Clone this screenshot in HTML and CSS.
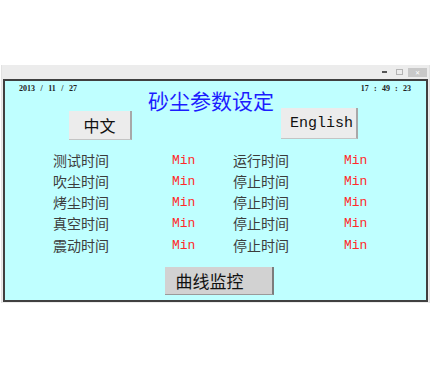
FILE: index.html
```html
<!DOCTYPE html>
<html lang="zh-CN">
    <head>
        <meta charset="UTF-8">
        <meta name="viewport" content="width=device-width, initial-scale=1.0">
        <title>砂尘参数设定</title>
        <link rel="stylesheet" href="styles.css">
    </head>
    <body>
        <div class="window">
            <div class="titlebar">
                <span class="ctl ctl-min"></span>
                <span class="ctl ctl-restore"></span>
                <span class="ctl ctl-close">&#x2715;</span>
            </div>
            <div class="panel">
                <div class="header">
                    <span class="date">2013 / 11 / 27</span>
                    <h1 class="title">砂尘参数设定</h1>
                    <span class="time">17 : 49 : 23</span>
                </div>
                <div class="langs">
                    <button class="btn btn-cn">中文</button>
                    <button class="btn btn-en">English</button>
                </div>
                <div class="params">
                    <span class="label">测试时间</span><span class="unit">Min</span>
                    <span class="label">运行时间</span><span class="unit">Min</span>
                    <span class="label">吹尘时间</span><span class="unit">Min</span>
                    <span class="label">停止时间</span><span class="unit">Min</span>
                    <span class="label">烤尘时间</span><span class="unit">Min</span>
                    <span class="label">停止时间</span><span class="unit">Min</span>
                    <span class="label">真空时间</span><span class="unit">Min</span>
                    <span class="label">停止时间</span><span class="unit">Min</span>
                    <span class="label">震动时间</span><span class="unit">Min</span>
                    <span class="label">停止时间</span><span class="unit">Min</span>
                </div>
                <div class="footer">
                    <button class="btn btn-curve">曲线监控</button>
                </div>
            </div>
        </div>
    </body>
</html>
```

FILE: styles.css
```css
body{
    margin: 0;
    padding-top: 65px;
    background-color: #fff;
    font-family: "Noto Sans CJK SC", sans-serif;
}

.window{
    width: 429px;
    margin-left: 1px;
    padding-bottom: 1px;
    background-color: #ececec;
    border-left: 1px solid #e2e2e2;
    border-right: 1px solid #e2e2e2;
    box-sizing: border-box;
}

/* 标题栏按钮 */
.titlebar{
    display: flex;
    justify-content: flex-end;
    align-items: center;
    height: 14px;
    padding-right: 2px;
}

.ctl{
    display: block;
}

.ctl-min{
    width: 5px;
    height: 2px;
    margin-right: 9px;
    background-color: #555;
}

.ctl-restore{
    width: 5px;
    height: 4px;
    margin-right: 5px;
    border: 1px solid #b4b4b4;
}

.ctl-close{
    width: 19px;
    height: 9px;
    background-color: #c8c8c8;
    color: #fff;
    font-family: "DejaVu Sans", sans-serif;
    font-size: 6px;
    line-height: 9px;
    text-align: center;
}

.panel{
    margin: 0 1px;
    padding-bottom: 5px;
    background-color: #bfffff;
    border: 2px solid #404040;
}

.header{
    display: flex;
    align-items: flex-start;
    height: 27px;
    padding: 0 15px 0 14px;
}

.date,
.time{
    font-family: "Liberation Serif", serif;
    font-size: 8px;
    font-weight: bold;
    line-height: 10px;
    color: #222;
    margin-top: 3px;
    white-space: pre;
}

.date{
    width: 129px;
    word-spacing: 3.5px;
}

.time{
    margin-left: auto;
    word-spacing: 3.2px;
}

.title{
    margin: 7px 0 0;
    font-size: 21px;
    font-weight: normal;
    line-height: 24px;
    color: #1c1cff;
}

.btn{
    display: block;
    padding: 0;
    border: 0;
    color: #111;
    font-family: "Noto Sans CJK SC", sans-serif;
    box-sizing: border-box;
}

.langs{
    display: flex;
    align-items: flex-start;
    height: 32px;
}

.btn-cn{
    width: 63px;
    height: 29px;
    margin: 3px 0 0 64px;
    font-size: 16px;
    background-color: #ececec;
    border-right: 2px solid #a8a8a8;
    border-bottom: 1px solid #c4c4c4;
}

.btn-en{
    width: 77px;
    height: 31px;
    margin-left: 149px;
    padding-left: 6px;
    font-family: "Liberation Mono", monospace;
    font-size: 15px;
    background-color: #ececec;
    border-right: 2px solid #a8a8a8;
    border-bottom: 1px solid #c4c4c4;
}

.params{
    display: grid;
    grid-template-columns: 119px 61px 111px auto;
    grid-auto-rows: 21.25px;
    align-items: center;
    margin-top: 9.4px;
    padding-left: 48px;
}

.label{
    font-size: 14px;
    line-height: 21px;
    color: #3c3c3c;
}

.unit{
    font-family: "Liberation Mono", monospace;
    font-size: 13px;
    line-height: 21px;
    color: #ff2a2a;
}

.footer{
    margin-top: 11.4px;
    padding-left: 160px;
}

.btn-curve{
    width: 109px;
    height: 28px;
    padding-right: 18px;
    font-size: 17px;
    background-color: #d2d2d2;
    border-right: 2px solid #7c7c7c;
    border-bottom: 1px solid #9a9a9a;
}
```
